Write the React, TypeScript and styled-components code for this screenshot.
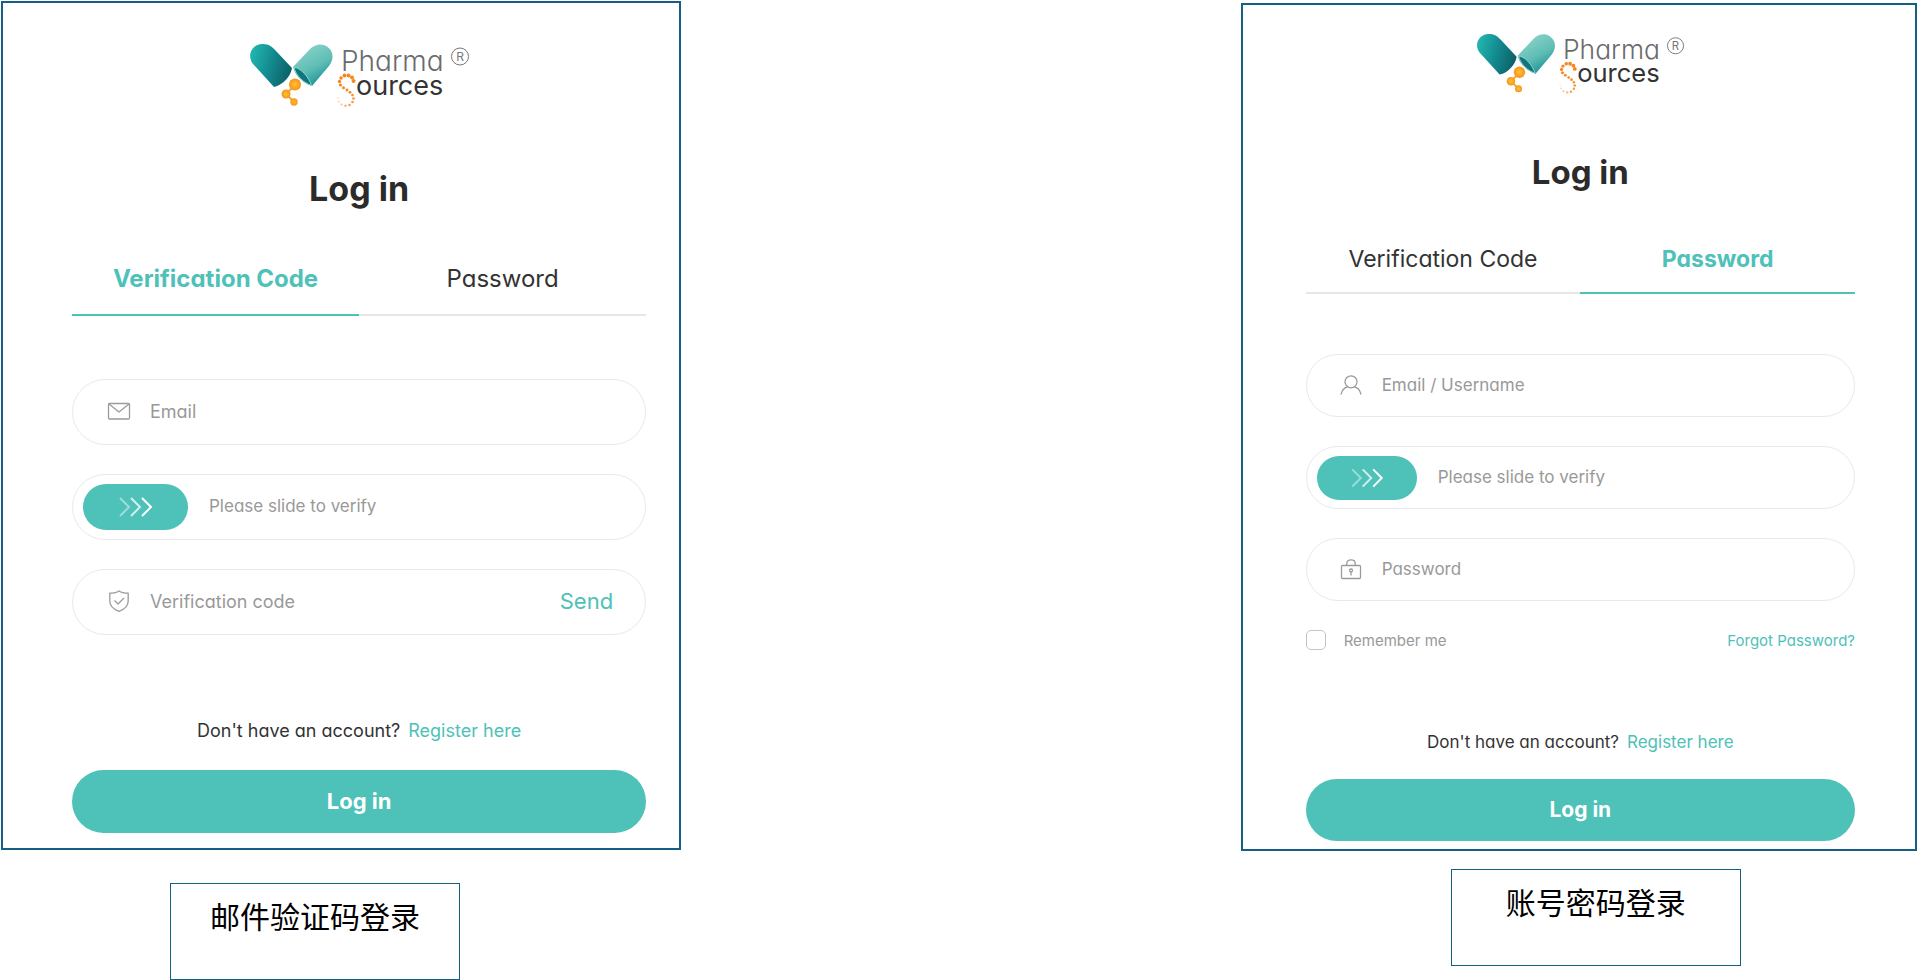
import React, { useId, useState } from 'react';
import styled, { createGlobalStyle, ThemeProvider } from 'styled-components';

const teal = '#4ec1b8';
const frame = '#156082';
const muted = '#999999';

const regular = {
  cardPad: '0 33px 15px 69px',
  logoTop: 40, logoWidth: 222,
  titleGap: 56, titleSize: 34,
  tabsGap: 31, tabHeight: 72, tabSize: 24,
  fieldsGap: 63, fieldHeight: 66, iconPad: 34,
  thumbWidth: 105, thumbHeight: 46, thumbInset: 10,
  fieldSize: 18, noteSize: 18, noteGap: 84, noteBottom: 27,
  buttonHeight: 63, buttonSize: 22,
  captionTop: 33, captionLeft: 169,
};

const compact: typeof regular = {
  cardPad: '0 60px 8px 63px',
  logoTop: 28, logoWidth: 210,
  titleGap: 53, titleSize: 33,
  tabsGap: 31, tabHeight: 67, tabSize: 23,
  fieldsGap: 60, fieldHeight: 63, iconPad: 32,
  thumbWidth: 100, thumbHeight: 44, thumbInset: 10,
  fieldSize: 17, noteSize: 17, noteGap: 80, noteBottom: 25,
  buttonHeight: 62, buttonSize: 21,
  captionTop: 18, captionLeft: 210,
};

const GlobalStyle = createGlobalStyle`
  *, *::before, *::after { box-sizing: border-box; }
  body {
    margin: 0;
    background: #fff;
    color: #333;
    font-family: Inter, "Noto Sans", "Noto Sans CJK SC", sans-serif;
    font-feature-settings: "cv11";
  }
  button, input { font: inherit; font-feature-settings: inherit; color: inherit; }
`;

const Page = styled.main`
  display: flex;
  justify-content: space-between;
  align-items: flex-start;
  padding: 1px 1px 0;
`;

const Panel = styled.figure<{ $width: string; $top?: number }>`
  width: ${(p) => p.$width};
  min-width: 480px;
  margin: ${(p) => p.$top ?? 0}px 0 0;
`;

const Card = styled.form`
  display: flex;
  flex-direction: column;
  padding: ${(p) => p.theme.cardPad};
  border: 2px solid ${frame};
`;

const LogoSvg = styled.svg`
  align-self: center;
  width: ${(p) => p.theme.logoWidth}px;
  height: auto;
  margin-top: ${(p) => p.theme.logoTop}px;
`;

const Title = styled.h1`
  margin: ${(p) => p.theme.titleGap}px 0 0;
  font-size: ${(p) => p.theme.titleSize}px;
  line-height: 48px;
  font-weight: 700;
  text-align: center;
  color: #2b2b2b;
`;

const Tabs = styled.div`
  display: grid;
  grid-template-columns: 1fr 1fr;
  margin-top: ${(p) => p.theme.tabsGap}px;
`;

const Tab = styled.button<{ $active: boolean }>`
  height: ${(p) => p.theme.tabHeight}px;
  padding: 0 0 2px;
  border: 0;
  border-bottom: 2px solid ${(p) => (p.$active ? teal : '#e6e6e6')};
  background: none;
  font-size: ${(p) => p.theme.tabSize}px;
  font-weight: ${(p) => (p.$active ? 700 : 400)};
  color: ${(p) => (p.$active ? teal : '#333')};
  white-space: nowrap;
  cursor: pointer;
`;

const Fields = styled.div`
  display: flex;
  flex-direction: column;
  gap: 29px;
  margin-top: ${(p) => p.theme.fieldsGap}px;
`;

const FieldBox = styled.label`
  display: flex;
  align-items: center;
  gap: 19px;
  height: ${(p) => p.theme.fieldHeight}px;
  padding: 0 32px 2px ${(p) => p.theme.iconPad}px;
  border: 1px solid #e9e9e9;
  border-radius: 33px;
  font-size: ${(p) => p.theme.fieldSize}px;
  color: ${muted};
`;

const Input = styled.input`
  flex: 1;
  min-width: 0;
  padding: 0;
  border: 0;
  outline: 0;
  background: none;
  color: #333;
  &::placeholder { color: ${muted}; opacity: 1; }
`;

const SendButton = styled.button`
  padding: 0;
  border: 0;
  background: none;
  font-size: 22px;
  color: ${teal};
  cursor: pointer;
`;

const FieldIcon = styled.svg`
  flex: none;
  width: 24px;
  height: 24px;
  fill: none;
  stroke: #9b9b9b;
  stroke-linejoin: round;
`;

const SlideBox = styled.div`
  display: grid;
  align-items: center;
  height: ${(p) => p.theme.fieldHeight}px;
  padding: 0 ${(p) => p.theme.thumbInset}px;
  border: 1px solid #e9e9e9;
  border-radius: 33px;
  & > * { grid-area: 1 / 1; }
`;

const SlideLabel = styled.label`
  padding: 0 0 2px ${(p) => p.theme.thumbWidth + 21}px;
  font-size: 17px;
  color: ${muted};
`;

const SlideRange = styled.input`
  appearance: none;
  width: 100%;
  height: ${(p) => p.theme.thumbHeight}px;
  margin: 0;
  background: none;
  cursor: pointer;
  &::-webkit-slider-thumb {
    appearance: none;
    width: ${(p) => p.theme.thumbWidth}px;
    height: ${(p) => p.theme.thumbHeight}px;
    border-radius: 23px;
    background: ${teal};
  }
`;

const Chevrons = styled.svg`
  width: ${(p) => p.theme.thumbWidth}px;
  height: 20px;
  fill: none;
  stroke: #fff;
  stroke-width: 2;
  pointer-events: none;
`;

const Options = styled.div`
  display: flex;
  justify-content: space-between;
  align-items: center;
  height: 20px;
  margin-top: 29px;
  font-size: 15px;
`;

const Remember = styled.label`
  display: flex;
  align-items: center;
  gap: 18px;
  color: ${muted};
`;

const Checkbox = styled.input`
  appearance: none;
  width: 20px;
  height: 20px;
  margin: 0;
  border: 1px solid #c4c4c4;
  border-radius: 5px;
  &:checked { background: ${teal}; border-color: ${teal}; }
`;

const Link = styled.a`
  color: ${teal};
  text-decoration: none;
`;

const Note = styled.p`
  display: flex;
  justify-content: center;
  gap: 8px;
  margin: ${(p) => p.theme.noteGap}px 0 ${(p) => p.theme.noteBottom}px;
  font-size: ${(p) => p.theme.noteSize}px;
  line-height: 24px;
`;

const Submit = styled.button`
  height: ${(p) => p.theme.buttonHeight}px;
  padding: 0 0 2px;
  border: 0;
  border-radius: 32px;
  background: ${teal};
  font-size: ${(p) => p.theme.buttonSize}px;
  font-weight: 700;
  color: #fff;
  cursor: pointer;
`;

const Caption = styled.figcaption`
  width: 290px;
  height: 97px;
  margin: ${(p) => p.theme.captionTop}px 0 0 ${(p) => p.theme.captionLeft}px;
  padding-top: 9px;
  border: 1px solid ${frame};
  font-family: "Noto Sans CJK SC", sans-serif;
  font-size: 30px;
  line-height: 44px;
  text-align: center;
  color: #000;
`;

/* Dots along the orange S: x, y, radius, opacity. */
const dots: [number, number, number, number][] = [
  [105.5, 38, 2, 1], [104, 34.5, 2, 1], [100.5, 32.5, 2, 1], [96.5, 32.5, 1.9, 1],
  [93, 35, 1.8, 1], [91.5, 38.5, 1.7, 1], [92.5, 42, 1.6, 1], [95.5, 44.8, 1.5, 1],
  [99, 47, 1.4, 1], [102, 49.3, 1.4, 1], [104.5, 52, 1.3, 0.95], [105.5, 55.5, 1.3, 0.9],
  [104.5, 59, 1.3, 0.85], [101.5, 62, 1.3, 0.8], [97.5, 62.8, 1.2, 0.65],
  [93.5, 61.5, 1.1, 0.5], [91, 58.5, 1, 0.35], [90, 55, 0.9, 0.25],
];

function Logo() {
  const id = useId().replace(/[^a-zA-Z0-9]/g, '');
  return (
    <LogoSvg viewBox="0 0 222 66" role="img" aria-label="Pharma Sources">
      <defs>
        <linearGradient id={`${id}a`} x1="0" y1="0.3" x2="1" y2="0.6">
          <stop offset="0" stopColor="#22b5ae" />
          <stop offset="0.5" stopColor="#128a8f" />
          <stop offset="1" stopColor="#0d5f66" />
        </linearGradient>
        <linearGradient id={`${id}b`} x1="0.35" y1="0.1" x2="0.8" y2="0.95">
          <stop offset="0" stopColor="#83d0c6" />
          <stop offset="0.5" stopColor="#5fbdb5" />
          <stop offset="1" stopColor="#128c91" />
        </linearGradient>
        <radialGradient id={`${id}c`}>
          <stop offset="0" stopColor="#ffc52e" />
          <stop offset="1" stopColor="#f6921e" />
        </radialGradient>
      </defs>
      <path d="M26 44 5 21C-1 13 3 3 12 1.300C19 0 24 3 28 8L44 25C43 33 35 42 26 44Z" fill={`url(#${id}a)`} />
      <path d="M45 24 62 6C67 1 74 0 79 3.500C86 8 86 17 81 23L64 43C55 40 47 33 45 24Z" fill={`url(#${id}b)`} />
      <path d="M46 24.500C52 24 61 34 63.500 42.500C56 40 48 33 46 24.500Z" fill="#11767b" stroke="#8ed6cd" strokeWidth="1" />
      <path d="M47 42 38 51 46 59" fill="none" stroke="#f6a53a" strokeWidth="2" />
      <circle cx="47" cy="41.500" r="6" fill={`url(#${id}c)`} />
      <circle cx="38" cy="51" r="4.500" fill={`url(#${id}c)`} />
      <circle cx="46" cy="59" r="3.700" fill={`url(#${id}c)`} />
      {dots.map(([x, y, r, o]) => (
        <circle key={`${x}-${y}`} cx={x} cy={y} r={r} fill="#f6861f" opacity={o} />
      ))}
      <text x="93" y="28" fontSize="28" fontWeight="300" fill="#6a6b6d">Pharma</text>
      <text x="108" y="52" fontSize="27" fontWeight="400" fill="#333">ources</text>
      <circle cx="212" cy="13.500" r="8.500" fill="none" stroke="#777" />
      <text x="212" y="18" fontSize="12" fill="#777" textAnchor="middle">R</text>
    </LogoSvg>
  );
}

const MailIcon = () => (
  <FieldIcon viewBox="0 0 24 24" strokeWidth="1.3" aria-hidden>
    <rect x="1.500" y="4.500" width="21" height="15.500" rx="1" />
    <path d="M2 5 12 13 22 5" />
  </FieldIcon>
);

const ShieldIcon = () => (
  <FieldIcon viewBox="0 0 24 24" strokeWidth="1.300" aria-hidden>
    <path d="M12 2C9.500 3.800 6 4.200 2.800 4.200V12C2.800 17 7 20.500 12 22.300C17 20.500 21.200 17 21.200 12V4.200C18 4.200 14.500 3.800 12 2Z" />
    <path d="M7.500 11.500 11 15 17 9" />
  </FieldIcon>
);

const UserIcon = () => (
  <FieldIcon viewBox="0 0 24 24" strokeWidth="1.300" aria-hidden>
    <ellipse cx="12" cy="8.800" rx="6" ry="6" />
    <path d="M2 21.500C2.800 17.500 5 14.800 8.500 13.800M22 21.500C21.200 17.500 19 14.800 15.500 13.800" />
  </FieldIcon>
);

const LockIcon = () => (
  <FieldIcon viewBox="0 0 24 24" strokeWidth="1.300" aria-hidden>
    <rect x="2.500" y="8.500" width="19" height="13" rx="1" />
    <path d="M7.800 8.500V6.500C7.800 4.200 9.500 2.800 12 2.800S16.200 4.200 16.200 6.500V8.500M12 14.500V18.500" />
    <circle cx="12" cy="13.500" r="1.500" />
  </FieldIcon>
);

function Slide() {
  const id = useId();
  const [value, setValue] = useState(0);
  return (
    <SlideBox>
      <SlideLabel htmlFor={id}>Please slide to verify</SlideLabel>
      <SlideRange id={id} type="range" min={0} max={100} value={value} onChange={(e) => setValue(Number(e.target.value))} />
      <Chevrons viewBox="0 0 105 20" aria-hidden style={{ justifySelf: value > 0 ? 'end' : 'start' }}>
        <path d="M37 1 46 10 37 19" opacity="0.45" />
        <path d="M48 1 57 10 48 19" opacity="0.75" />
        <path d="M59 1 68 10 59 19" />
      </Chevrons>
    </SlideBox>
  );
}

function Header({ active }: { active: 'code' | 'password' }) {
  return (
    <>
      <Logo />
      <Title>Log in</Title>
      <Tabs role="tablist">
        <Tab type="button" role="tab" aria-selected={active === 'code'} $active={active === 'code'}>Verification Code</Tab>
        <Tab type="button" role="tab" aria-selected={active === 'password'} $active={active === 'password'}>Password</Tab>
      </Tabs>
    </>
  );
}

function Footer() {
  return (
    <>
      <Note>
        <span>Don't have an account?</span>
        <Link href="#register">Register here</Link>
      </Note>
      <Submit type="submit">Log in</Submit>
    </>
  );
}

export default function App() {
  return (
    <>
      <GlobalStyle />
      <Page>
        <ThemeProvider theme={regular}>
          <Panel $width="35.5%">
            <Card onSubmit={(e) => e.preventDefault()}>
              <Header active="code" />
              <Fields>
                <FieldBox>
                  <MailIcon />
                  <Input type="email" placeholder="Email" aria-label="Email" />
                </FieldBox>
                <Slide />
                <FieldBox>
                  <ShieldIcon />
                  <Input type="text" placeholder="Verification code" aria-label="Verification code" />
                  <SendButton type="button">Send</SendButton>
                </FieldBox>
              </Fields>
              <Footer />
            </Card>
            <Caption>邮件验证码登录</Caption>
          </Panel>
        </ThemeProvider>
        <ThemeProvider theme={compact}>
          <Panel $width="35.3%" $top={2}>
            <Card onSubmit={(e) => e.preventDefault()}>
              <Header active="password" />
              <Fields>
                <FieldBox>
                  <UserIcon />
                  <Input type="text" placeholder="Email / Username" aria-label="Email / Username" />
                </FieldBox>
                <Slide />
                <FieldBox>
                  <LockIcon />
                  <Input type="password" placeholder="Password" aria-label="Password" />
                </FieldBox>
              </Fields>
              <Options>
                <Remember>
                  <Checkbox type="checkbox" />
                  Remember me
                </Remember>
                <Link href="#forgot">Forgot Password?</Link>
              </Options>
              <Footer />
            </Card>
            <Caption>账号密码登录</Caption>
          </Panel>
        </ThemeProvider>
      </Page>
    </>
  );
}
